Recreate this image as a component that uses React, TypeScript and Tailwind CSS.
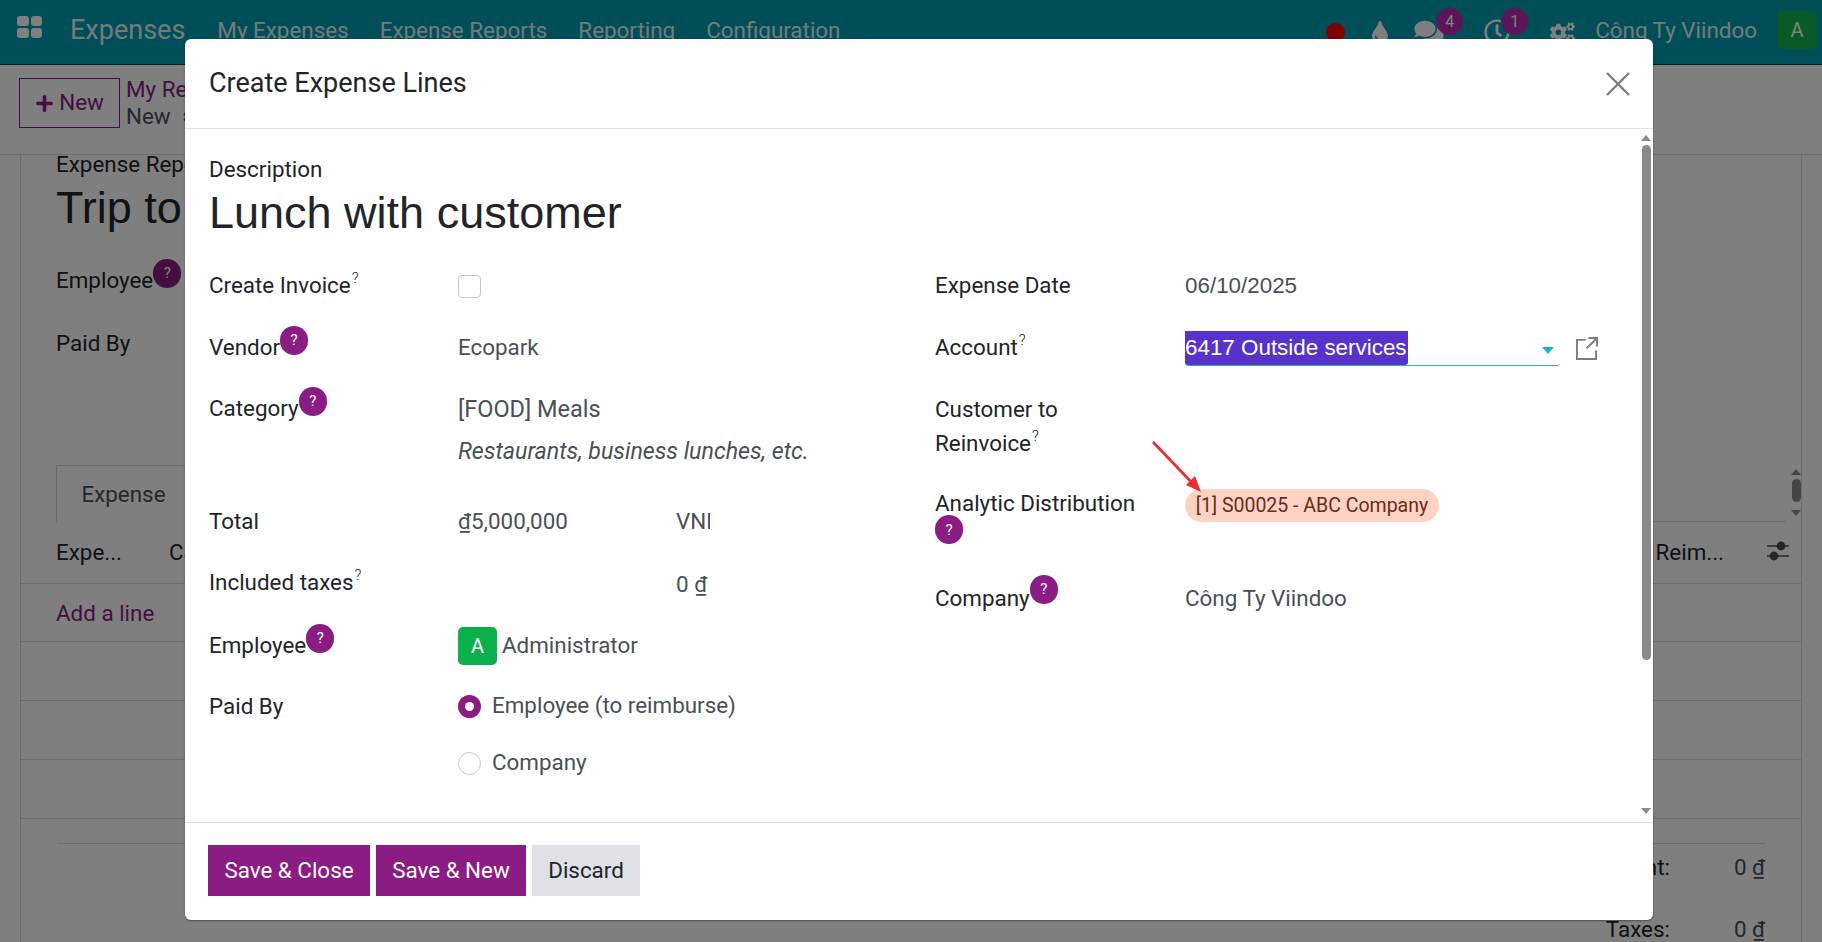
import React from 'react';
import { FaTint, FaComments, FaRegClock, FaCogs, FaPlus, FaCog } from 'react-icons/fa';

const arial = "[font-family:'Liberation_Sans',Arial,sans-serif]";

function Help({ className = '' }: { className?: string }) {
  return (
    <span className={`flex h-[29px] w-[28px] shrink-0 items-center justify-center rounded-full bg-[#8b1c83] text-[15px] text-white ${className}`}>
      ?
    </span>
  );
}

function Sup() {
  return <sup className="relative -top-[10px] ml-px align-baseline text-[15px] font-light text-[#212529]">?</sup>;
}

function Badge({ n, className }: { n: number; className: string }) {
  return (
    <span className={`absolute -top-[11px] flex h-[27px] w-[27px] items-center justify-center rounded-full bg-[#b82ab0] text-[16px] text-white ${className}`}>
      {n}
    </span>
  );
}

function Arrows({ className = '', height = 'h-[23px]' }: { className?: string; height?: string }) {
  return (
    <div className={`absolute flex flex-col items-center ${className}`}>
      <div className="h-0 w-0 border-x-[5px] border-b-[6px] border-x-transparent border-b-[#8a8a8a]" />
      <div className={`mt-[4px] w-[9px] rounded-full bg-[#8a8a8a] ${height}`} />
    </div>
  );
}

function LabelHelp({ text }: { text: string }) {
  return (
    <span className="-mt-[2px] flex items-start">
      <span className="leading-[28px]">{text}</span>
      <Help className="-mt-[7px]" />
    </span>
  );
}

function Row({ label, className, children }: { label: React.ReactNode; className: string; children?: React.ReactNode }) {
  return (
    <div className={`flex ${className}`}>
      <div className="w-[249px] shrink-0 text-[#212529]">{label}</div>
      <div className="flex-1 text-[#495057]">{children}</div>
    </div>
  );
}

function Page() {
  return (
    <div className="flex h-full flex-col bg-white text-[22.4px] text-[#212529]">
      <nav className="flex h-[65px] shrink-0 items-center border-b border-[#004a50] bg-[#009eb0] text-white">
        <div className="ml-[17px] mb-[10px] grid h-[22px] w-[25px] grid-cols-2 gap-[2px]">
          <span className="rounded-[3px] bg-white" />
          <span className="rounded-[3px] bg-white" />
          <span className="rounded-[3px] bg-white" />
          <span className="rounded-[3px] bg-white" />
        </div>
        <span className="mb-[4px] ml-[28px] text-[27px] opacity-90">Expenses</span>
        <div className="mb-[2px] ml-[32px] flex gap-[31px] opacity-90">
          <span>My Expenses</span>
          <span>Expense Reports</span>
          <span>Reporting</span>
          <span>Configuration</span>
        </div>
        <div className="ml-auto flex items-center">
          <span className="mr-[2px] h-[19px] w-[19px] rounded-full bg-[#ff0000]" />
          <FaTint className="ml-[24px] h-[23px] w-[18px]" />
          <span className="relative ml-[25px]">
            <FaComments className="h-[26px] w-[30px]" />
            <Badge n={4} className="left-[22px]" />
          </span>
          <span className="relative ml-[40px]">
            <FaRegClock className="h-[26px] w-[26px]" />
            <Badge n={1} className="left-[17px]" />
          </span>
          <FaCogs className="ml-[40px] h-[25px] w-[25px]" />
          <span className="mb-[2px] ml-[20px] opacity-90">Công Ty Viindoo</span>
          <span className="ml-[20px] mb-[4px] mr-[5px] flex h-[38px] w-[40px] items-center justify-center rounded-[5px] bg-[#14b450] text-[20px]">A</span>
        </div>
      </nav>

      <div className="flex h-[90px] shrink-0 border-b border-[#d8dadd] pl-[19px] pt-[13px]">
        <button className="flex h-[50px] w-[101px] items-center justify-center gap-[5px] border border-[#8b1c83] text-[#8b1c83]">
          <FaPlus className="h-[19px] w-[19px]" />
          New
        </button>
        <div className="-mt-[2px] ml-[6px] leading-[27px]">
          <div className="text-[#8b1c83]">My Reports</div>
          <div className="flex items-center text-[#495057]">
            New
            <FaCog className="ml-[12px] h-[16px] w-[16px]" />
          </div>
        </div>
      </div>

      <main className="relative mx-[20px] flex-1 border-x border-[#d8dadd]">
        <div className="px-[35px]">
          <div className="h-[22px] leading-[18px]">Expense Report</div>
          <div className={`h-[64px] text-[45px] leading-[62px] ${arial}`}>Trip to Ecopark</div>
          <div className="flex h-[62px] items-start pt-[27px]">
            <LabelHelp text="Employee" />
          </div>
          <div className="h-[162px] pt-[26px] leading-[28px]">Paid By</div>
        </div>

        <div className="ml-[35px] mr-[15px] flex h-[57px] border-b border-[#d8dadd]">
          <div className="flex h-[58px] w-[135px] items-center justify-center border-x border-t border-[#d8dadd] bg-white text-[#495057]">Expense</div>
        </div>
        <div className="flex h-[62px] items-center border-b border-[#d8dadd] pl-[35px] pr-[11px]">
          <span>Expe...</span>
          <span className="ml-[47px]">Category</span>
          <span className="ml-auto">Reim...</span>
          <svg className="ml-[42px] h-[24px] w-[24px]" viewBox="0 0 24 24" fill="none" stroke="#495057" strokeWidth="1.6">
            <path d="M1 5h22M1 15h22" />
            <circle cx="15" cy="5" r="3.6" fill="#495057" />
            <circle cx="8" cy="15" r="3.6" fill="#495057" />
          </svg>
        </div>
        <div className="flex h-[58px] items-center border-b border-[#d8dadd] pl-[35px] pt-[2px] text-[#8b1c83]">Add a line</div>
        <div className="h-[59px] border-b border-[#d8dadd]" />
        <div className="h-[59px] border-b border-[#d8dadd]" />
        <div className="h-[59px] border-b border-[#d8dadd]" />
        <div className="mx-[36px] mt-[24px] border-t border-[#d8dadd]">
          <div className="ml-auto flex h-[47px] w-[200px] items-center justify-end">
            <span className="mr-[64px]">Amount:</span>
            <span className="text-[#495057]">0 <u>₫</u></span>
          </div>
          <div className="ml-auto flex h-[78px] w-[200px] items-center justify-end">
            <span className="mr-[64px]">Taxes:</span>
            <span className="text-[#495057]">0 <u>₫</u></span>
          </div>
        </div>
        <Arrows className="left-[1770px] top-[314px]" />
        <div className="absolute left-[1770px] top-[355px] h-0 w-0 border-x-[5px] border-t-[6px] border-x-transparent border-t-[#8a8a8a]" />
      </main>
    </div>
  );
}

function Modal() {
  return (
    <div className="relative ml-[185px] mt-[39px] flex h-[881px] w-[1468px] flex-col rounded-[6px] bg-white text-[22.4px] shadow-[0_1px_2px_rgba(0,0,0,0.4)]">
      <header className="flex h-[90px] shrink-0 items-center justify-between border-b border-[#dee2e6] pl-[24px] pr-[22px]">
        <h2 className="text-[27px] text-[#212529]">Create Expense Lines</h2>
        <svg className="h-[26px] w-[26px]" viewBox="0 0 26 26" stroke="#7d7d7d" strokeWidth="2.4">
          <path d="M2 2l22 22M24 2L2 24" />
        </svg>
      </header>

      <div className="h-[693px] shrink-0 pl-[24px] pt-[26px]">
        <div className="h-[28px] leading-[28px] text-[#212529]">Description</div>
        <div className={`h-[72px] text-[45px] leading-[60px] text-[#212529] ${arial}`}>Lunch with customer</div>

        <div className="flex">
          <div className="w-[726px] shrink-0">
            <Row label={<>Create Invoice<Sup /></>} className="h-[62px] items-center">
              <div className="h-[23px] w-[23px] rounded-[4px] border border-[#c8c8c8]" />
            </Row>
            <Row label={<LabelHelp text="Vendor" />} className="h-[62px] items-center">
              <span className="block -mt-[1px]">Ecopark</span>
            </Row>
            <Row label={<LabelHelp text="Category" />} className="h-[112px] items-start pt-[17px]">
              <div className="-mt-[1px] text-[23.5px] leading-[28px]">[FOOD] Meals</div>
              <div className="mt-[14px] text-[23.2px] italic leading-[28px]">Restaurants, business lunches, etc.</div>
            </Row>
            <Row label="Total" className="h-[62px] items-center">
              <div className="flex">
                <span className="w-[218px]"><u>₫</u>5,000,000</span>
                <span className="w-[34px] overflow-hidden">VND</span>
              </div>
            </Row>
            <Row label={<>Included taxes<Sup /></>} className="h-[60px] items-center">
              <div className="mt-[4px] pl-[218px]">0 <u>₫</u></div>
            </Row>
            <Row label={<LabelHelp text="Employee" />} className="h-[65px] items-center">
              <div className="flex items-center">
                <span className="flex h-[38px] w-[39px] items-center justify-center rounded-[5px] bg-[#0db14b] text-[20px] text-white">A</span>
                <span className="ml-[5px]">Administrator</span>
              </div>
            </Row>
            <Row label={<span className="-mt-[2px] block">Paid By</span>} className="items-start pt-[14px]">
              <div className="flex h-[28px] items-center">
                <span className="flex h-[23px] w-[23px] items-center justify-center rounded-full bg-[#8b1c83]">
                  <span className="h-[9px] w-[9px] rounded-full bg-white" />
                </span>
                <span className="ml-[11px]">Employee (to reimburse)</span>
              </div>
              <div className="mt-[29px] flex h-[28px] items-center">
                <span className="h-[23px] w-[23px] rounded-full border border-[#c8c8c8]" />
                <span className="ml-[11px]">Company</span>
              </div>
            </Row>
          </div>

          <div className="w-[640px] shrink-0">
            <Row label="Expense Date" className="h-[62px] items-center">
              <span className={`ml-px ${arial}`}>06/10/2025</span>
            </Row>
            <Row label={<>Account<Sup /></>} className="h-[62px] items-center">
              <div className="ml-px flex items-center">
                <div className="relative h-[35px] w-[375px] rounded-b-[3px] border-b border-[#3aa7b5]">
                  <span className={`block h-[34px] w-[223px] whitespace-nowrap rounded-b-[3px] bg-[#5733cc] leading-[34px] text-white ${arial}`}>6417 Outside services</span>
                  <span className="absolute right-[6px] top-[16px] h-0 w-0 border-x-[6px] border-t-[7px] border-x-transparent border-t-[#17b6c4]" />
                </div>
                <svg className="ml-[15px] h-[23px] w-[23px]" viewBox="0 0 24 24" fill="none" stroke="#7d7d7d" strokeWidth="2">
                  <path d="M11 3H2v20h20v-9M14 1h9v9M23 1L12 12" />
                </svg>
              </div>
            </Row>
            <Row label={<div className="-mt-[1px] leading-[34px]">Customer to<br />Reinvoice<Sup /></div>} className="h-[94px] items-start pt-[14px]" />
            <Row label={<div className="leading-[28px]">Analytic Distribution<Help className="-mt-[2px]" /></div>} className="h-[111px] items-start pt-[16px]">
              <span className="ml-px flex h-[33px] w-[254px] items-center justify-center rounded-full bg-[#ffd3c4] text-[19.5px] leading-[33px] text-[#6b2a1a]">[1] S00025 - ABC Company</span>
            </Row>
            <Row
              label={
                <span className="flex items-start">
                  <span className="leading-[28px]">Company</span>
                  <Help className="-mt-[9px]" />
                </span>
              }
              className="h-[28px] items-start"
            >
              <span className="ml-px block leading-[28px]">Công Ty Viindoo</span>
            </Row>
          </div>
        </div>
      </div>

      <footer className="flex flex-1 gap-[6px] border-t border-[#dee2e6] pl-[23px] pt-[22px]">
        <button className="h-[51px] w-[162px] bg-[#8b1c83] text-white">Save &amp; Close</button>
        <button className="h-[51px] w-[150px] bg-[#8b1c83] text-white">Save &amp; New</button>
        <button className="h-[51px] w-[108px] bg-[#dee2e6] text-[#212529]">Discard</button>
      </footer>

      <Arrows className="left-[1456px] top-[96px]" height="h-[515px]" />
      <div className="absolute left-[1456px] top-[769px] h-0 w-0 border-x-[5px] border-t-[6px] border-x-transparent border-t-[#8a8a8a]" />

      <svg className="absolute left-[967px] top-[402px] h-[52px] w-[52px]" viewBox="0 0 52 52" fill="none">
        <path d="M1 1l44 46" stroke="#e5302f" strokeWidth="2.8" />
        <path d="M49 51l-15-7 9-9z" fill="#e5302f" />
      </svg>
    </div>
  );
}

export default function App() {
  return (
    <div className="relative h-screen overflow-hidden font-['Roboto',sans-serif]">
      <Page />
      <div className="absolute inset-0 bg-black/50">
        <Modal />
      </div>
    </div>
  );
}
